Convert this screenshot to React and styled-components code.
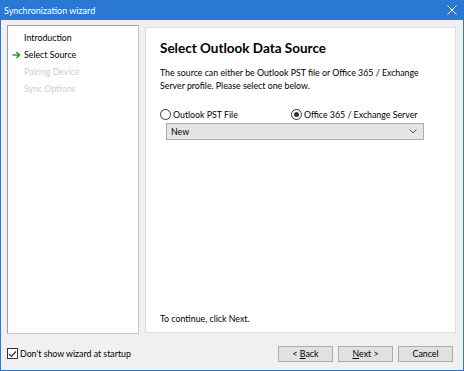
import styled, { createGlobalStyle } from 'styled-components';

const GlobalStyle = createGlobalStyle`
    html, body {
        margin: 0;
        padding: 0;
        background: #f0f0f0;
    }
    body {
        font-family: Lato, 'Noto Sans', sans-serif;
        font-size: 8.8px;
        color: #000;
    }
`;

const Window = styled.div`
    width: 464px;
    height: 371px;
    box-sizing: border-box;
    display: flex;
    flex-direction: column;
    border: 1px solid #2b78d2;
    border-top: none;
    background: #f0f0f0;
`;

const TitleBar = styled.div`
    height: 20px;
    flex: none;
    display: flex;
    align-items: center;
    justify-content: space-between;
    padding: 0 6px 0 3px;
    background: #2b78d2;
    color: #fff;
    font-size: 9px;
`;

const CloseGlyph = styled.svg`
    width: 10px;
    height: 10px;
`;

const Body = styled.div`
    flex: 1;
    display: flex;
    flex-direction: column;
    padding: 5px 7px 0 6px;
`;

const Main = styled.div`
    display: flex;
    gap: 6px;
    height: 309px;
`;

const StepList = styled.ul`
    list-style: none;
    margin: 0;
    padding: 3px 0 0;
    width: 132px;
    box-sizing: border-box;
    background: #fff;
    border: 1px solid #a0a0a0;
    border-right-color: #c8c8c8;
    border-bottom-color: #c8c8c8;
`;

const Step = styled.li`
    display: flex;
    align-items: center;
    height: 17px;
    padding-left: 4px;
    color: ${(p) => (p.$disabled ? '#c6cfdb' : '#000')};
`;

const StepMarker = styled.span`
    width: 12px;
    display: flex;
    align-items: center;
`;

const Content = styled.section`
    flex: 1;
    margin-top: 2px;
    margin-bottom: 1px;
    box-sizing: border-box;
    background: #fff;
    border: 1px solid #dcdcdc;
    display: flex;
    flex-direction: column;
    padding: 12px 14px 8px 14px;
`;

const Heading = styled.h1`
    margin: 0;
    font-size: 13.5px;
    font-weight: bold;
    line-height: 16px;
`;

const Paragraph = styled.p`
    margin: 10px 0 0;
    line-height: 13px;
`;

const RadioRow = styled.div`
    display: flex;
    margin-top: 14px;
    height: 16px;
    align-items: center;
`;

const RadioLabel = styled.label`
    display: flex;
    align-items: center;
    gap: 2px;
    width: ${(p) => p.$width || 'auto'};
`;

const RadioCircle = styled.span`
    width: 11px;
    height: 11px;
    box-sizing: border-box;
    border-radius: 50%;
    border: 1px solid #333;
    background: #fff;
    display: flex;
    align-items: center;
    justify-content: center;

    &::after {
        content: '';
        display: ${(p) => (p.$checked ? 'block' : 'none')};
        width: 5px;
        height: 5px;
        border-radius: 50%;
        background: #333;
    }
`;

const Select = styled.div`
    margin: 1px 0 0 6px;
    width: 258px;
    height: 17px;
    box-sizing: border-box;
    display: flex;
    align-items: center;
    justify-content: space-between;
    padding: 0 6px 0 4px;
    background: #e5e5e5;
    border: 1px solid #adadad;
`;

const Hint = styled.p`
    margin: auto 0 0;
`;

const Footer = styled.div`
    flex: 1;
    display: flex;
    align-items: center;
    padding: 3px 3px 0 0;
`;

const CheckLabel = styled.label`
    display: flex;
    align-items: center;
    gap: 2px;
    flex: 1;
`;

const CheckBox = styled.span`
    width: 11px;
    height: 11px;
    box-sizing: border-box;
    border: 1px solid #333;
    background: #fff;
    display: flex;
    align-items: center;
    justify-content: center;
`;

const Buttons = styled.div`
    display: flex;
    gap: 5px;
`;

const Button = styled.button`
    width: 55px;
    height: 16px;
    box-sizing: border-box;
    padding: 0;
    font: inherit;
    color: #000;
    background: #e1e1e1;
    border: 1px solid #adadad;

    u {
        text-decoration: underline;
    }
`;

export default function App() {
    return (
        <>
            <GlobalStyle />
            <Window>
                <TitleBar>
                    <span>Synchronization wizard</span>
                    <CloseGlyph viewBox="0 0 10 10">
                        <path d="M0.5 0.5 L9.5 9.5 M9.5 0.5 L0.5 9.5" stroke="#fff" strokeWidth="1" />
                    </CloseGlyph>
                </TitleBar>
                <Body>
                    <Main>
                        <StepList>
                            <Step>
                                <StepMarker />
                                Introduction
                            </Step>
                            <Step>
                                <StepMarker>
                                    <svg width="9" height="8" viewBox="0 0 9 8">
                                        <path d="M0.5 4 H7.5 M4.5 1 L7.5 4 L4.5 7" stroke="#2ba02b" strokeWidth="1.6" fill="none" />
                                    </svg>
                                </StepMarker>
                                Select Source
                            </Step>
                            <Step $disabled>
                                <StepMarker />
                                Pairing Device
                            </Step>
                            <Step $disabled>
                                <StepMarker />
                                Sync Options
                            </Step>
                        </StepList>
                        <Content>
                            <Heading>Select Outlook Data Source</Heading>
                            <Paragraph>
                                The source can either be Outlook PST file or Office 365 / Exchange
                                Server profile. Please select one below.
                            </Paragraph>
                            <RadioRow>
                                <RadioLabel $width="131px">
                                    <RadioCircle />
                                    Outlook PST File
                                </RadioLabel>
                                <RadioLabel>
                                    <RadioCircle $checked />
                                    Office 365 / Exchange Server
                                </RadioLabel>
                            </RadioRow>
                            <Select>
                                <span>New</span>
                                <svg width="8" height="5" viewBox="0 0 8 5">
                                    <path d="M0.5 0.5 L4 4 L7.5 0.5" stroke="#555" fill="none" />
                                </svg>
                            </Select>
                            <Hint>To continue, click Next.</Hint>
                        </Content>
                    </Main>
                    <Footer>
                        <CheckLabel>
                            <CheckBox>
                                <svg width="9" height="8" viewBox="0 0 9 8">
                                    <path d="M1 4 L3.5 6.5 L8 1.5" stroke="#333" strokeWidth="1.2" fill="none" />
                                </svg>
                            </CheckBox>
                            Don't show wizard at startup
                        </CheckLabel>
                        <Buttons>
                            <Button>
                                &lt; <u>B</u>ack
                            </Button>
                            <Button>
                                <u>N</u>ext &gt;
                            </Button>
                            <Button>Cancel</Button>
                        </Buttons>
                    </Footer>
                </Body>
            </Window>
        </>
    );
}
